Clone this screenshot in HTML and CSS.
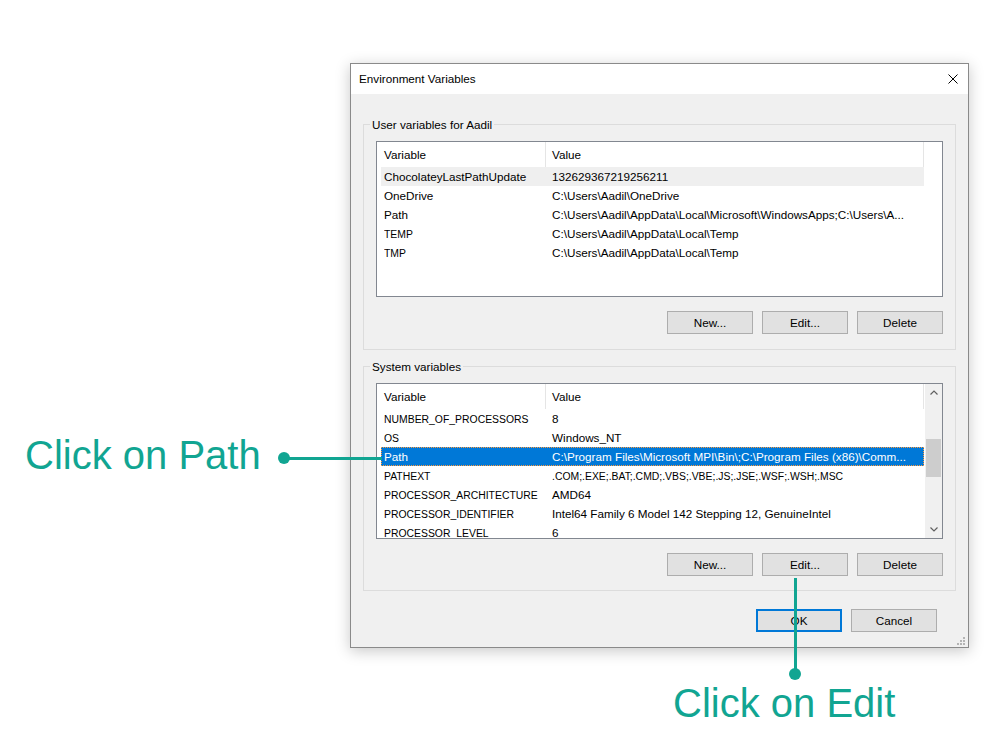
FILE: index.html
```html
<!DOCTYPE html>
<html>
<head>
<meta charset="utf-8">
<title>Environment Variables</title>
<link rel="stylesheet" href="styles.css">
</head>
<body>
<div class="desktop">
  <div class="dialog">
    <div class="titlebar">
      <span class="title">Environment Variables</span>
      <svg class="close" viewBox="0 0 10 10" width="10" height="10"><path d="M0.5 0.5 L9.5 9.5 M9.5 0.5 L0.5 9.5" stroke="#000" stroke-width="1" fill="none"/></svg>
    </div>
    <div class="content">
      <div class="group">
        <span class="legend">User variables for Aadil</span>
        <div class="listview">
          <div class="lv-body">
            <div class="lv-header"><div class="hcell c1">Variable</div><div class="hcell c2">Value</div></div>
            <div class="row hover"><div class="cell c1">ChocolateyLastPathUpdate</div><div class="cell c2">132629367219256211</div></div>
            <div class="row"><div class="cell c1">OneDrive</div><div class="cell c2">C:\Users\Aadil\OneDrive</div></div>
            <div class="row"><div class="cell c1">Path</div><div class="cell c2">C:\Users\Aadil\AppData\Local\Microsoft\WindowsApps;C:\Users\A...</div></div>
            <div class="row"><div class="cell c1"><span class="caps">TEMP</span></div><div class="cell c2">C:\Users\Aadil\AppData\Local\Temp</div></div>
            <div class="row"><div class="cell c1"><span class="caps">TMP</span></div><div class="cell c2">C:\Users\Aadil\AppData\Local\Temp</div></div>
          </div>
        </div>
        <div class="btnrow">
          <button class="btn">New...</button>
          <button class="btn">Edit...</button>
          <button class="btn">Delete</button>
        </div>
      </div>

      <div class="group sys">
        <span class="legend">System variables</span>
        <div class="listview">
          <div class="lv-body">
            <div class="lv-header"><div class="hcell c1">Variable</div><div class="hcell c2">Value</div></div>
            <div class="row"><div class="cell c1"><span class="caps">NUMBER_OF_PROCESSORS</span></div><div class="cell c2">8</div></div>
            <div class="row"><div class="cell c1"><span class="caps">OS</span></div><div class="cell c2">Windows_NT</div></div>
            <div class="row sel"><div class="cell c1">Path</div><div class="cell c2">C:\Program Files\Microsoft MPI\Bin\;C:\Program Files (x86)\Comm...</div></div>
            <div class="row"><div class="cell c1"><span class="caps">PATHEXT</span></div><div class="cell c2"><span class="caps">.COM;.EXE;.BAT;.CMD;.VBS;.VBE;.JS;.JSE;.WSF;.WSH;.MSC</span></div></div>
            <div class="row"><div class="cell c1"><span class="caps">PROCESSOR_ARCHITECTURE</span></div><div class="cell c2">AMD64</div></div>
            <div class="row"><div class="cell c1"><span class="caps">PROCESSOR_IDENTIFIER</span></div><div class="cell c2">Intel64 Family 6 Model 142 Stepping 12, GenuineIntel</div></div>
            <div class="row"><div class="cell c1"><span class="caps">PROCESSOR_LEVEL</span></div><div class="cell c2">6</div></div>
          </div>
          <div class="scrollbar">
            <div class="sb-btn"><svg viewBox="0 0 8 5" width="8" height="5"><polyline points="0.5,4.5 4,1 7.5,4.5" stroke="#606060" stroke-width="1.2" fill="none"/></svg></div>
            <div class="sb-thumb"></div>
            <div class="sb-fill"></div>
            <div class="sb-btn"><svg viewBox="0 0 8 5" width="8" height="5"><polyline points="0.5,0.5 4,4 7.5,0.5" stroke="#606060" stroke-width="1.2" fill="none"/></svg></div>
          </div>
        </div>
        <div class="btnrow">
          <button class="btn">New...</button>
          <button class="btn">Edit...</button>
          <button class="btn">Delete</button>
        </div>
      </div>

      <div class="footer">
        <button class="btn default">OK</button>
        <button class="btn">Cancel</button>
      </div>
    </div>
    <svg class="grip" viewBox="0 0 8 8" width="8" height="8">
      <rect x="6" y="0" width="2" height="2" fill="#b4b4b4"/>
      <rect x="3" y="3" width="2" height="2" fill="#b4b4b4"/>
      <rect x="6" y="3" width="2" height="2" fill="#b4b4b4"/>
      <rect x="0" y="6" width="2" height="2" fill="#b4b4b4"/>
      <rect x="3" y="6" width="2" height="2" fill="#b4b4b4"/>
      <rect x="6" y="6" width="2" height="2" fill="#b4b4b4"/>
    </svg>
  </div>
</div>

<div class="anno-text t-path">Click on Path</div>
<div class="anno-line line-h"></div>
<div class="anno-dot d-path"></div>

<div class="anno-line line-v"></div>
<div class="anno-dot d-edit"></div>
<div class="anno-text t-edit">Click on Edit</div>
</body>
</html>
```

FILE: styles.css
```css
* { box-sizing: border-box; }
html, body { margin: 0; padding: 0; }
body {
  background: #fff;
  width: 985px;
  height: 753px;
  position: relative;
  overflow: hidden;
  font-family: "Liberation Sans", Arial, sans-serif;
  font-size: 11.7px;
  color: #000;
}
.desktop { padding: 63px 0 0 350px; }
.dialog {
  width: 619px;
  height: 585px;
  border: 1px solid #8a8a8a;
  background: #f0f0f0;
  box-shadow: 0 3px 14px rgba(0, 0, 0, 0.22);
  position: relative;
  display: flex;
  flex-direction: column;
}
.titlebar {
  height: 30px;
  flex: none;
  background: #fff;
  display: flex;
  align-items: center;
  justify-content: space-between;
  padding: 0 10px 0 8px;
}
.title { margin-top: -2px; }
.close { display: block; }
.content {
  padding: 30px 12px 15px 12px;
  display: flex;
  flex-direction: column;
}
.group {
  border: 1px solid #dcdcdc;
  position: relative;
  padding: 16px 12px 15px 12px;
}
.group.sys { margin-top: 16px; padding-bottom: 14px; }
.legend {
  position: absolute;
  top: -8px;
  left: 6px;
  line-height: 16px;
  padding: 0 2px;
  background: #f0f0f0;
  white-space: nowrap;
}
.listview {
  height: 156px;
  border: 1px solid #828790;
  background: #fff;
  display: flex;
  overflow: hidden;
}
.lv-body { flex: 1; overflow: hidden; }
.lv-header { height: 25px; display: flex; }
.hcell { line-height: 25px; white-space: nowrap; }
.hcell.c1 { width: 168px; padding-left: 7px; }
.hcell.c2 {
  width: 379px;
  padding-left: 6px;
  border-left: 1px solid #e5e5e5;
  border-right: 1px solid #e5e5e5;
}
.row {
  height: 19px;
  margin-left: 4px;
  width: 543px;
  display: flex;
  line-height: 19px;
  white-space: nowrap;
}
.cell { overflow: hidden; }
.cell.c1 { width: 164px; flex: none; padding-left: 3px; }
.cell.c2 { flex: 1; padding-left: 7px; }
.caps {
  display: inline-block;
  transform: scaleX(0.89);
  transform-origin: left center;
}
.row.hover { background: #efefef; }
.row.sel {
  background: #0078d7;
  color: #fff;
  outline: 1px dotted #ff9a3c;
  outline-offset: -1px;
}
.scrollbar {
  width: 17px;
  flex: none;
  background: #f0f0f0;
  display: flex;
  flex-direction: column;
}
.sb-btn {
  height: 17px;
  flex: none;
  display: flex;
  align-items: center;
  justify-content: center;
}
.sb-btn svg { display: block; }
.sb-thumb {
  height: 38px;
  margin: 38px 1px 0 1px;
  background: #cdcdcd;
  flex: none;
}
.sb-fill { flex: 1; }
.btnrow {
  margin-top: 14px;
  display: flex;
  justify-content: flex-end;
  gap: 9px;
}
.btn {
  width: 86px;
  height: 23px;
  padding: 0;
  margin: 0;
  background: #e1e1e1;
  border: 1px solid #adadad;
  font-family: inherit;
  font-size: 11.7px;
  color: #000;
}
.btn.default { border: 2px solid #0078d7; }
.footer {
  margin-top: 18px;
  display: flex;
  justify-content: flex-end;
  gap: 9px;
  padding-right: 19px;
}
.grip { position: absolute; right: 3px; bottom: 2px; display: block; }

.anno-text {
  position: absolute;
  font-family: "Liberation Sans", Arial, sans-serif;
  font-size: 40px;
  line-height: 40px;
  color: #11a592;
  white-space: nowrap;
}
.t-path { left: 25px; top: 435px; }
.t-edit { left: 673px; top: 683px; }
.anno-dot {
  position: absolute;
  width: 12px;
  height: 12px;
  border-radius: 50%;
  background: #11a592;
}
.d-path { left: 278px; top: 452px; }
.d-edit { left: 789px; top: 668px; }
.anno-line { position: absolute; background: #11a592; }
.line-h { left: 284px; top: 457px; width: 98px; height: 3px; }
.line-v { left: 794px; top: 578px; width: 3px; height: 92px; }
```
